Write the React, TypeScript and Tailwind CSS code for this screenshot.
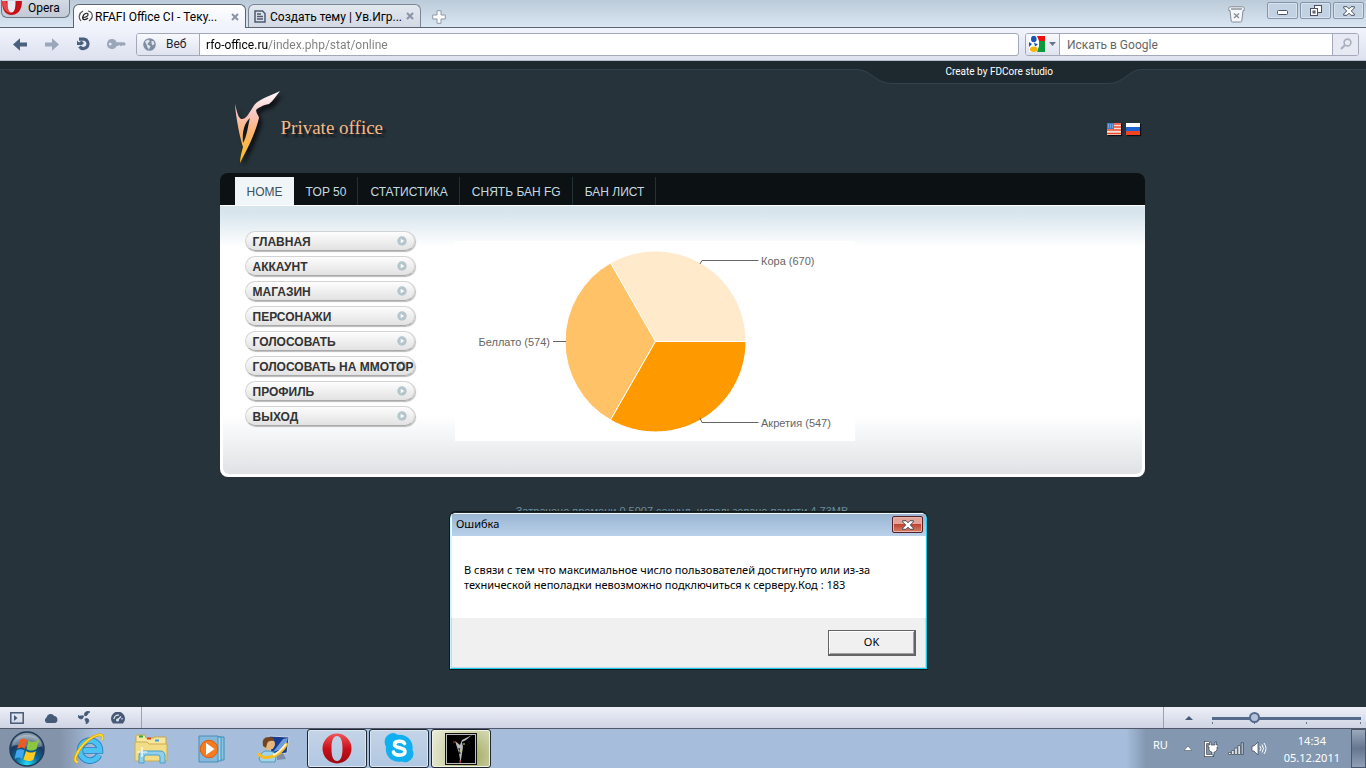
import React from "react";

const ui = "font-[Roboto,'Noto_Sans',sans-serif]";
const humanist = "font-['Noto_Sans','Open_Sans',sans-serif] text-[11px]";
const arial = "font-['Liberation_Sans',Arial,sans-serif]";

function CloseMark() {
  return (
    <svg className="size-2" viewBox="0 0 8 8" fill="none" stroke="#8a94a6" strokeWidth="2">
      <path d="M1 1 7 7M7 1 1 7" />
    </svg>
  );
}

function TabStrip() {
  return (
    <div className="relative flex h-7 items-start border-b border-[#5c6470] bg-linear-to-b from-[#bccbd9] to-[#d9e6f3] pl-px pr-0.5">
      <button className="flex h-[18px] w-[69px] shrink-0 items-center gap-1.5 rounded-b-md border border-t-0 border-[#6d7683] bg-linear-to-b from-[#d3dae3] to-[#c2cad6] pb-0.5 text-xs leading-[14px] text-black">
        <svg className="h-[14px] w-[20px] shrink-0" viewBox="0 0 20 14">
          <path d="M0 0H20C20 9 15.500 14 9.500 14C3.500 14 0 9 0 0Z" fill="#c80f17" />
          <path d="M0 0H4C5 4 6 7 9 12C4 12 1 8 0 0Z" fill="#e8454a" />
          <path d="M5.500 0H13.500C13.500 8 12.200 11.500 9.500 11.500C6.800 11.500 5.500 8 5.500 0Z" fill="#e8edf3" />
        </svg>
        <span>Opera</span>
      </button>
      <div className="relative z-10 ml-[3px] mt-1 flex h-6 w-[173px] shrink-0 items-center rounded-t-md border border-b-0 border-[#5c6470] bg-linear-to-b from-white to-[#eff2fb] pl-1 pr-1.5">
        <svg className="size-[15px] shrink-0" viewBox="0 0 15 15">
          <path d="M5 2C1 4 0 9 3 12M10 2C15 3 16 9 11 12" fill="none" stroke="#555" strokeWidth="1.200" />
          <path d="M4.500 8.500C8 8.500 10.500 7 10 5C9.500 3.300 5.500 4.500 4.700 8C4.200 11 7.500 11.500 10 9" fill="none" stroke="#222" strokeWidth="1.200" />
        </svg>
        <span className="ml-0.5 grow whitespace-nowrap pt-px text-xs text-black">RFAFI Office CI - Теку...</span>
        <button aria-label="Закрыть вкладку"><CloseMark /></button>
      </div>
      <div className="ml-0.5 mt-1 flex h-[23px] w-[173px] shrink-0 items-center rounded-t-md border border-b-0 border-[#7c8593] bg-linear-to-b from-[#e2e7ef] to-[#d4dae4] pl-[5px] pr-1.5">
        <svg className="h-[13px] w-[12px] shrink-0" viewBox="0 0 12 13" fill="none" stroke="#4d5b70" strokeWidth="1.500">
          <path d="M1 1H8.500L11 3.500V12H1ZM3 4H7M3 6.500H9M3 9H9" />
        </svg>
        <span className="ml-1 grow whitespace-nowrap pt-0.5 text-xs text-black">Создать тему | Ув.Игр...</span>
        <button aria-label="Закрыть вкладку"><CloseMark /></button>
      </div>
      <button className="ml-[11px] mt-2.5" aria-label="Новая вкладка">
        <svg className="size-[14px]" viewBox="0 0 14 14" fill="#fdfdfe" stroke="#8f99a8">
          <path d="M5 .7H9V5H13.300V9H9V13.300H5V9H.7V5H5Z" />
        </svg>
      </button>
      <div className="grow" />
      <button className="mr-[22px] mt-1.5" aria-label="Закрытые вкладки">
        <svg className="h-[17px] w-[17px]" viewBox="0 0 17 17" fill="#f5f7fa" stroke="#858c96">
          <path d="M.8 2.500Q.8.800 2.500.800H14.500Q16.200.800 16.200 2.500V4.500H15L13.800 15Q13.600 16 12.600 16H4.400Q3.400 16 3.200 15L2 4.500H.8Z" />
          <path d="M3 3H14" stroke="#5f6670" />
          <path d="M6 7.500 11 12M11 7.500 6 12" strokeWidth="1.300" />
        </svg>
      </button>
      <div className="mt-0.5 flex gap-0.5">
        <button aria-label="Свернуть" className="flex h-[17px] w-[31px] items-center justify-center rounded-[2px] border border-[#8494ad] bg-[#c3d2e2] pt-1 shadow-[inset_0_0_0_1px_#d8e3ee]">
          <svg className="h-[5px] w-[11px]" viewBox="0 0 11 5"><rect x=".5" y=".5" width="10" height="4" rx="1" fill="#fff" stroke="#4c5263" /></svg>
        </button>
        <button aria-label="Восстановить" className="flex h-[17px] w-[31px] items-center justify-center rounded-[2px] border border-[#8494ad] bg-[#c3d2e2] shadow-[inset_0_0_0_1px_#d8e3ee]">
          <svg className="h-[11px] w-[12px]" viewBox="0 0 12 11" fill="#fff" stroke="#4c5263">
            <rect x="4.500" y=".5" width="7" height="7" /><rect x=".5" y="3.500" width="7" height="7" /><rect x="3" y="6" width="2" height="2" fill="#9aa8bb" />
          </svg>
        </button>
        <button aria-label="Закрыть" className="flex h-[17px] w-[31px] items-center justify-center rounded-[2px] border border-[#8494ad] bg-[#c3d2e2] shadow-[inset_0_0_0_1px_#d8e3ee]">
          <svg className="h-[10px] w-[12px]" viewBox="0 0 12 10" fill="#fff" stroke="#4c5263">
            <path d="M.7.700H4L6 2.800 8 .700H11.300V2L8.300 5 11.300 8V9.300H8L6 7.200 4 9.300H.7V8L3.700 5 .7 2Z" />
          </svg>
        </button>
      </div>
    </div>
  );
}

function Toolbar() {
  return (
    <div className="flex h-[33px] items-center border-b border-[#b5bccb] bg-linear-to-b from-[#f1f4fc] to-[#dde1ee] pl-[13px] pr-[7px]">
      <div className="flex shrink-0 items-center gap-[18px]">
        <button aria-label="Назад">
          <svg className="h-[13px] w-[14px]" viewBox="0 0 14 13" fill="#4b607e"><path d="M0 6.500 7 .3V4.500H14V8.500H7V12.700Z" /></svg>
        </button>
        <button aria-label="Вперёд">
          <svg className="h-[13px] w-[14px]" viewBox="0 0 14 13" fill="#9aa6b9"><path d="M14 6.500 7 .3V4.500H0V8.500H7V12.700Z" /></svg>
        </button>
        <button aria-label="Обновить">
          <svg className="h-[14px] w-[14px]" viewBox="0 0 14 14">
            <path d="M2 2.200H7A4.700 4.700 0 1 1 2.500 9.500" fill="none" stroke="#4b607e" strokeWidth="3.200" />
            <path d="M0 8V3.500L2 5.500 4.500 3.500 7 6 5 8Z" fill="#4b607e" />
          </svg>
        </button>
        <button aria-label="Пароли" className="-ml-0.5">
          <svg className="h-[10px] w-[19px]" viewBox="0 0 19 10" fill="#9aa6b9" fillRule="evenodd">
            <path d="M5 0A5 5 0 0 1 9.600 3.200H17L19 5 17 7 15.500 6 14 7.500 12.500 6 11 7H9.600A5 5 0 1 1 5 0ZM3.200 3.700A1.400 1.400 0 1 0 3.200 6.500 1.400 1.400 0 0 0 3.200 3.700Z" />
          </svg>
        </button>
      </div>
      <div className="ml-2.5 flex h-[23px] grow items-stretch overflow-hidden rounded-[3px] border border-[#a3a9b8] bg-white">
        <button className="flex w-[63px] shrink-0 items-center gap-2.5 border-r border-[#a3a9b8] bg-linear-to-b from-[#f8f9fd] to-[#dfe3ef] pl-1.5 text-xs text-[#1d2633]">
          <svg className="size-[13px]" viewBox="0 0 13 13">
            <circle cx="6.500" cy="6.500" r="6.300" fill="#7f8da1" />
            <path d="M2 3.500 5 1.500 7 3 5.500 4.500 4.500 6.500 7.500 8 6 11.500 4.500 9.500 3.500 6.500ZM8.500 3 10.500 3 11.500 6 9.500 7.500 8.500 5.500Z" fill="#dfe4ec" />
          </svg>
          Веб
        </button>
        <input aria-label="Адрес" readOnly value="rfo-office.ru/index.php/stat/online"
          className="min-w-0 grow bg-[linear-gradient(90deg,#000_68px,#7d7d7d_68px)] bg-clip-text pl-1.5 pt-0.5 text-xs text-transparent outline-none" />
      </div>
      <div className="ml-1.5 flex h-[23px] w-[334px] shrink-0 items-stretch overflow-hidden rounded-[3px] border border-[#a3a9b8] bg-white">
        <button aria-label="Google" className="flex w-[34px] shrink-0 items-center gap-1 border-r border-[#a3a9b8] bg-linear-to-b from-[#f8f9fd] to-[#dfe3ef] pl-[3px]">
          <svg className="size-[16px]" viewBox="0 0 16 16">
            <rect width="16" height="16" fill="#fff" />
            <path d="M8 0H16V5H10Z" fill="#e11" /><path d="M10 5H16V16H8L10 10Z" fill="#0c9a3d" />
            <path d="M0 6 3 8 0 11Z" fill="#1a55b5" />
            <ellipse cx="4.800" cy="3" rx="2.800" ry="3.200" fill="#1558b8" />
            <path d="M5 6.500 9 8.500 6 10.500Z" fill="#1558b8" />
            <ellipse cx="4.800" cy="13.300" rx="3.800" ry="2.700" fill="#f5b30c" />
          </svg>
          <svg className="h-1 w-[7px]" viewBox="0 0 7 4" fill="#68758a"><path d="M0 0H7L3.500 4Z" /></svg>
        </button>
        <input aria-label="Поиск" placeholder="Искать в Google" className="min-w-0 grow pl-[7px] pt-0.5 text-xs outline-none placeholder:text-[#666]" />
        <button aria-label="Найти" className="flex w-[26px] shrink-0 items-center justify-center border-l border-[#a3a9b8] bg-[#e7eaf3]">
          <svg className="size-[12px]" viewBox="0 0 12 12" fill="none" stroke="#a9b0be"><circle cx="7.500" cy="4.500" r="3.400" strokeWidth="1.600" /><path d="M5 7 1 11" strokeWidth="2.200" /></svg>
        </button>
      </div>
    </div>
  );
}

function Logo() {
  return (
    <svg className="h-[76px] w-[52px] shrink-0 overflow-visible drop-shadow-[3px_4px_2px_rgba(0,0,0,0.7)]" viewBox="0 0 52 76">
      <defs>
        <linearGradient id="flame" x1="0" y1="0" x2="0" y2="1">
          <stop offset="0" stopColor="#fff" /><stop offset=".33" stopColor="#f9c3bd" /><stop offset=".6" stopColor="#fbb46c" /><stop offset="1" stopColor="#fdc010" />
        </linearGradient>
      </defs>
      <path fill="url(#flame)" d="M45 0C41 5 38 10 34 13C28 14 23 17 21 19C21 22 24 25 24 27C20 44 11 60 5 72C5 66 7 60 8 56C5 47 1 28 0 13C2 21 3 26 6 28C11 29 14 22 18 16C22 9 30 7 45 0ZM15 27C9 32 7 42 8 52C12 46 13 34 15 27Z" />
    </svg>
  );
}

const sections = ["TOP 50", "СТАТИСТИКА", "СНЯТЬ БАН FG", "БАН ЛИСТ"];
const menu = ["ГЛАВНАЯ", "АККАУНТ", "МАГАЗИН", "ПЕРСОНАЖИ", "ГОЛОСОВАТЬ", "ГОЛОСОВАТЬ НА ММОТОР", "ПРОФИЛЬ", "ВЫХОД"];

function Chart() {
  return (
    <svg className={`${arial} h-[200px] w-[400px] bg-white text-[11px]`} viewBox="0 1 400 200" role="img" aria-label="Онлайн по расам">
      <g stroke="#fff">
        <path d="M200.500 101.500V101.500H291A90.500 90.500 0 0 0 155.500 23Z" fill="#ffeacc" />
        <path d="M200.500 101.500 155.500 23A90.500 90.500 0 0 0 155.500 180Z" fill="#ffc266" />
        <path d="M200.500 101.500 155.500 180A90.500 90.500 0 0 0 291 101.500Z" fill="#ff9900" />
      </g>
      <g fill="none" stroke="#666">
        <path d="M245 24 247 20.500H303.500" /><path d="M245 178 247 182.500H303.500" /><path d="M98 101.500H111" />
      </g>
      <g fill="#666">
        <text x="306" y="25">Кора (670)</text>
        <text x="306" y="187">Акретия (547)</text>
        <text x="95" y="106" textAnchor="end">Беллато (574)</text>
      </g>
    </svg>
  );
}

function Dialog() {
  return (
    <div role="dialog" aria-labelledby="dlg-title" className={`${humanist} absolute left-[450px] top-[451px] w-[477px] overflow-hidden rounded-t-md border border-[#16cdea] border-l-[#c9f3fa] border-t-[#1a242b] bg-[#f0f0f0] text-black outline outline-[#10181c]`}>
      <div className="flex h-[23px] items-center justify-between bg-linear-to-b from-[#99b4d1] to-[#b9d1ea] pl-[5px] pr-[3px] shadow-[inset_1px_1px_0_#f4f8fc]">
        <h2 id="dlg-title">Ошибка</h2>
        <button aria-label="Закрыть окно" className="flex h-[17px] w-[31px] items-center justify-center rounded-[2px] border border-[#53212c] bg-linear-to-b from-[#e3a297] from-45% via-[#be4431] via-50% to-[#d47f66] shadow-[inset_0_0_0_1px_#e9b5ab]">
          <svg className="h-[10px] w-[12px]" viewBox="0 0 12 10" fill="#fff" stroke="#4c4a57">
            <path d="M.7.700H4L6 2.800 8 .700H11.300V2L8.300 5 11.300 8V9.300H8L6 7.200 4 9.300H.7V8L3.700 5 .7 2Z" />
          </svg>
        </button>
      </div>
      <div className="mx-px bg-white px-3 py-[26px] leading-[15px]">
        <p>В связи с тем что максимальное число пользователей достигнуто или из-за<br />технической неполадки невозможно подключиться к серверу.Код : 183</p>
      </div>
      <div className="flex justify-end border border-t-0 border-[#c8d8e8] pb-[11px] pr-[9px] pt-3">
        <button className="h-[26px] w-[88px] border border-r-2 border-b-2 border-[#646464] bg-[#f0f0f0] shadow-[inset_1px_1px_0_#fff,inset_-1px_-1px_0_#a0a0a0]">OK</button>
      </div>
    </div>
  );
}

function Page() {
  return (
    <main className={`${arial} relative bg-[#27333b] pb-[189px]`}>
      <svg className="absolute inset-x-0 top-0 h-6 w-full" viewBox="0 0 1366 24" preserveAspectRatio="none">
        <path d="M-2-1H1368V8.500H1142C1128 8.500 1125 22.500 1108 22.500H892C875 22.500 871 8.500 857 8.500H-2Z" fill="#1e292f" stroke="#33434e" />
      </svg>
      <div className="relative mx-auto w-[925px] -left-px">
        <div className={`${ui} pl-[726px] pt-[3px] text-[10px] leading-[15px] text-white`}>Create by FDCore studio</div>
        <header className="flex h-[94px] items-start justify-between pl-[15px] pr-[5px] pt-3">
          <div className="flex">
            <Logo />
            <h1 className="-ml-1.5 mt-6 font-['Liberation_Serif',serif] text-[19px] leading-[26px] text-[#f6b987] [text-shadow:3px_3px_2px_#11181c]">Private office</h1>
          </div>
          <div className="mt-8 flex gap-[5px]">
            <a href="#en" aria-label="English">
              <svg className="h-[12px] w-[14px] shadow-[1px_1px_1px_#0a0f12]" viewBox="0 0 14 12">
                <rect width="14" height="12" fill="#f8ded6" /><path d="M0 1H14M0 4H14M0 7H14M0 10.500H14" stroke="#e8492a" strokeWidth="1.500" /><rect width="7" height="6" fill="#3b7fd0" /><path d="M1 2H6M1 4H6" stroke="#a8c8ec" strokeDasharray="1 1" />
              </svg>
            </a>
            <a href="#ru" aria-label="Русский">
              <svg className="h-[12px] w-[14px] shadow-[1px_1px_1px_#0a0f12]" viewBox="0 0 14 12"><rect width="14" height="4" fill="#fff" /><rect y="4" width="14" height="4" fill="#1d62cf" /><rect y="8" width="14" height="4" fill="#f04524" /></svg>
            </a>
          </div>
        </header>
        <nav className="flex h-8 items-end rounded-t-lg bg-[#0c1114] pl-[15px] text-xs leading-[26px]">
          <a href="#home" className="bg-[#f0f5f8] pl-3 pr-[11px] pt-0.5 text-[#3c4f5e]">HOME</a>
          {sections.map((s) => (
            <a key={s} href="#section" className="border-r border-[#253138] pl-3 pr-[11px] pt-0.5 text-[#c3dbe0]">{s}</a>
          ))}
        </nav>
        <div className="rounded-b-lg bg-[linear-gradient(#fff_1px,#d7e5ed_1px,#d7e5ed_8px,#fff_42px)] px-[3px] pb-[3px]">
          <div className="flex h-[269px] rounded-b-md bg-[linear-gradient(transparent_210px,#dfe2e5_100%)] pl-[22px] pt-[26px]">
            <ul className="w-[170px] space-y-[5px]">
              {menu.map((m) => (
                <li key={m}>
                  <a href="#menu" className="relative flex h-5 items-center whitespace-nowrap rounded-full border border-[#d3d3d3] border-b-[#aaa] bg-linear-to-b from-[#fdfdfd] to-[#e2e2e2] pl-[7px] text-xs font-bold text-[#333] shadow-[1px_1px_1px_#bbb]">
                    <svg className="absolute right-[7px] top-1 size-[10px]" viewBox="0 0 10 10"><circle cx="5" cy="5" r="4.700" fill="#b4c5cc" /><path d="M3.700 2.700 7.300 5 3.700 7.300Z" fill="#fff" /></svg>
                    <span className="relative pt-px">{m}</span>
                  </a>
                </li>
              ))}
            </ul>
            <div className="ml-10 mt-[10px]"><Chart /></div>
          </div>
        </div>
        <p className="mt-[27px] text-center text-[11px] leading-[14px] text-[#6a8c9a]">Затрачено времени 0.5007 секунд, использовано памяти 4.73MB</p>
      </div>
      <Dialog />
    </main>
  );
}

function StatusBar() {
  return (
    <div className="flex h-[22px] items-stretch border-b border-[#50586a] bg-linear-to-b from-[#eef0f8] to-[#cfd4e4]">
      <div className="flex w-[142px] items-center gap-5 border-r border-[#9aa1b0] pl-2.5">
        <button aria-label="Панели">
          <svg className="h-[12px] w-[14px]" viewBox="0 0 14 12"><rect x=".8" y=".8" width="12.400" height="10.400" fill="none" stroke="#465976" strokeWidth="1.500" /><path d="M4 3V9L7.500 6Z" fill="#465976" /></svg>
        </button>
        <button aria-label="Link">
          <svg className="h-[10px] w-[14px]" viewBox="0 0 14 10" fill="#465976"><path d="M3 10A3 3 0 0 1 2.500 4.500 4.200 4.200 0 0 1 10.200 3 3.600 3.600 0 0 1 11 10Z" /></svg>
        </button>
        <button aria-label="Unite">
          <svg className="size-[13px]" viewBox="0 0 13 13" fill="#465976"><path d="M7 5C5 2 9-1 12 1 9.500 1.500 10 4 8 5ZM5.500 6.500C4 9 0 8 0 4.500 2 6 4 4 6 5.200ZM8 7.500C12 7 11.500 12 8 13 9 10.500 6.500 9.500 7 7.500Z" stroke="#465976" strokeWidth=".8" /><circle cx="6.900" cy="6.200" r="1.300" fill="#e0e4ee" /></svg>
        </button>
        <button aria-label="Turbo">
          <svg className="h-[12px] w-[14px]" viewBox="0 0 14 12"><path d="M2 11.500A7 7 0 1 1 12 11.500Z" fill="#465976" /><path d="M3 7A4 4 0 0 1 8 3.200M6.500 8 10 4.500M11 6V7.500" stroke="#e0e4ee" strokeWidth="1.200" fill="none" /><circle cx="6.500" cy="8" r="1.500" fill="#e0e4ee" /></svg>
        </button>
      </div>
      <div className="grow" />
      <div className="flex w-[203px] items-center border-l border-[#9aa1b0] pl-[21px]">
        <button aria-label="Масштаб" className="mr-[19px]"><svg className="h-1 w-2" viewBox="0 0 8 4" fill="#465976"><path d="M4 0 8 4H0Z" /></svg></button>
        <input type="range" aria-label="Масштаб страницы" defaultValue={27}
          className="h-4 w-[149px] appearance-none bg-[linear-gradient(#566b8c,#566b8c),linear-gradient(90deg,#68758a_1px,transparent_1px_42px,#68758a_42px_43px,transparent_43px_94px,#68758a_94px_95px,transparent_95px_148px,#68758a_148px)] bg-[length:100%_3px,100%_2px] bg-[position:0_7px,0_12px] bg-no-repeat [&::-webkit-slider-thumb]:size-[11px] [&::-webkit-slider-thumb]:appearance-none [&::-webkit-slider-thumb]:rounded-full [&::-webkit-slider-thumb]:border-2 [&::-webkit-slider-thumb]:border-[#566b8c] [&::-webkit-slider-thumb]:bg-[#b3c1d9]" />
      </div>
    </div>
  );
}

function Taskbar() {
  const running = "flex h-[39px] w-[60px] items-center justify-center rounded-[3px] border border-[#1e2733]";
  return (
    <div className={`${humanist} flex h-[39px] items-center bg-[linear-gradient(90deg,#8393aa_60px,#a6bedc_95px,#a6bedc_calc(100%-240px),#8397b0_calc(100%-220px))] text-white`}>
      <button aria-label="Пуск" className="ml-[9px]">
        <svg className="size-9" viewBox="0 0 36 36">
          <defs>
            <radialGradient id="orb" cx=".5" cy=".95" r=".85"><stop offset="0" stopColor="#25e0fb" /><stop offset=".4" stopColor="#0d6a9e" /><stop offset=".75" stopColor="#173a5e" /><stop offset="1" stopColor="#8598aa" /></radialGradient>
          </defs>
          <circle cx="18" cy="18" r="17" fill="url(#orb)" stroke="#203b58" strokeWidth="1.500" />
          <path d="M3 15C5 0 31 0 33 15C24 20 12 12 3 15Z" fill="#fff" opacity=".3" />
          <path d="M11 9C14 7 16 8 18 9L16 18C14 16 11 16 8 18Z" fill="#ee5a24" />
          <path d="M19.500 9.500C23 12 26 11 30 9L27.500 18C24 20 21 20 17.500 18Z" fill="#8cc63f" />
          <path d="M7.500 19.500C11 17.500 13 18 15.500 19.500L13 28C11 26 8 26 5.500 28Z" fill="#3fa7f0" />
          <path d="M17 20C20 22 24 22 27 20L24.500 28.500C21 31 18 30 14.500 28.500Z" fill="#ffcb1f" />
        </svg>
      </button>
      <button aria-label="Internet Explorer" className="ml-[29px]">
        <svg className="h-[32px] w-[30px]" viewBox="0 0 30 32" fill="none">
          <path d="M25 22A10 10 0 1 1 26 17.500H10" stroke="#2a7fc0" strokeWidth="6.500" />
          <path d="M25 22A10 10 0 1 1 26 17.500H10" stroke="#4cc2f2" strokeWidth="4.800" />
          <path d="M4 29C-3 29 4 16 13 8C22 1 31-1 28 7" stroke="#e3a600" strokeWidth="3" /><path d="M4 29C-3 29 4 16 13 8C22 1 31-1 28 7" stroke="#ffe03a" strokeWidth="1.500" />
        </svg>
      </button>
      <button aria-label="Проводник" className="ml-[30px]">
        <svg className="h-[30px] w-[34px]" viewBox="0 0 34 30">
          <path d="M2 4V2Q2 1 3 1H11L12 4H20V3H31Q32 3 32 4V26H2Z" fill="#f7e69c" stroke="#c5a84a" />
          <rect x="5" y="1.500" width="4" height="2" fill="#2ca54a" /><rect x="13" y="3.500" width="4" height="2" fill="#d9432f" /><rect x="21" y="5.500" width="4" height="2" fill="#38a4dd" />
          <path d="M1 8H13L15 10H33V26Q33 27 32 27H2Q1 27 1 26Z" fill="#f3dc86" stroke="#c9ae55" />
          <path d="M5 29V22Q5 17 10 17H26Q31 17 31 22V29H26V23Q26 21 24 21H12Q10 21 10 23V29Z" fill="#8ed0ee" stroke="#4b9fcb" />
          <path d="M8 13V23M3 18H13" stroke="#fff" strokeWidth="1.200" />
        </svg>
      </button>
      <button aria-label="Проигрыватель" className="ml-[30px]">
        <svg className="h-[28px] w-[30px]" viewBox="0 0 30 28">
          <path d="M7 2H26V25H7Z" fill="#89c5e3" stroke="#3990bb" /><path d="M4 2H23V26H4Z" fill="#a4d5ed" stroke="#3990bb" /><path d="M1 1H20V27H1Z" fill="#84b9dc" stroke="#4d8db9" />
          <circle cx="11" cy="14" r="8.800" fill="#f47b20" stroke="#dc5d12" /><path d="M8 8V20L16.500 14Z" fill="#fff" />
        </svg>
      </button>
      <button aria-label="Удалённая помощь" className="ml-[29px]">
        <svg className="h-[28px] w-[34px]" viewBox="0 0 34 28">
          <path d="M12 1 32 2 30 18 14 20Z" fill="#183d8f" stroke="#cad6e6" /><path d="M20 19 26 18 29 24 20 25Z" fill="#7f8ea5" />
          <path d="M16 17 26 4 31 3 28 13Z" fill="#6c9ddf" />
          <path d="M2 24Q4 15 11 16Q19 16 19 22L18 27H4Z" fill="#9ed5ea" stroke="#5799b9" />
          <circle cx="12" cy="9" r="6" fill="#e6b77c" /><path d="M6 11Q4 2 12 2Q18 2 17 6Q11 5 10 9L9 13Z" fill="#72451f" />
          <path d="M2 18C2 25 22 25 30 8" fill="none" stroke="#f8bd23" strokeWidth="3" /><path d="M16 20C22 18 25 14 29 9" fill="none" stroke="#fff2bf" strokeWidth="2" />
        </svg>
      </button>
      <div className="ml-4 flex gap-0.5">
        <button aria-label="Opera" className={`${running} bg-linear-to-b from-[#c5d4e7] to-[#b0c7e2] shadow-[inset_0_0_0_1px_#dbe6f2]`}>
          <svg className="h-[32px] w-[30px]" viewBox="0 0 30 32">
            <defs><linearGradient id="opera" x1="0" y1="0" x2="0" y2="1"><stop stopColor="#f0565a" /><stop offset=".5" stopColor="#cc1019" /><stop offset="1" stopColor="#9c0910" /></linearGradient></defs>
            <path fillRule="evenodd" fill="url(#opera)" d="M15 .5A14.500 15 0 1 1 15 30.500A14.500 15 0 1 1 15 .5ZM15 3C11 3 9.500 8 9.500 15.500S11 28 15 28 20.500 23 20.500 15.500 19 3 15 3Z" />
          </svg>
        </button>
        <button aria-label="Skype" className={`${running} bg-linear-to-b from-[#c5d4e7] to-[#b0c7e2] shadow-[inset_0_0_0_1px_#dbe6f2]`}>
          <svg className="size-[31px]" viewBox="0 0 31 31">
            <path d="M9 0A8.500 8.500 0 0 1 13.500 1.800C23 .5 30 8 28.500 17A8.500 8.500 0 0 1 17.500 28.500C8 30 .5 23 2 13.500A8.800 8.800 0 0 1 9 0Z" fill="#10b0f0" />
            <path d="M20.500 10.500C19 7.500 10.500 7 10.500 11.500C10.500 16 21 13.500 21 18.500C21 23.500 10.500 23 9.500 19" fill="none" stroke="#fff" strokeWidth="3.600" strokeLinecap="round" />
          </svg>
        </button>
        <button aria-label="Private office" className={`${running} bg-[radial-gradient(circle_at_70%_70%,#a4ab62,#d3d8b2_60%,#eceedd)] shadow-[inset_0_0_0_1px_#f0f2df]`}>
          <svg className="size-8" viewBox="0 0 32 32">
            <rect x=".5" y=".5" width="31" height="31" stroke="#111" /><rect x="1.500" y="1.500" width="29" height="29" fill="none" stroke="#bbb" />
            <path d="M27 2 21 7 17 9 18 14 15.500 30 14 20 10 8 15 12 17 7Z" fill="#b9b9b9" /><path d="M14 15 15 21" stroke="#000" />
            <path d="M15 27V30M9 8V10" stroke="#d33" /><path d="M19 10V12M15 17V19" stroke="#dd3" />
          </svg>
        </button>
      </div>
      <div className="grow" />
      <span className="pb-1.5">RU</span>
      <button aria-label="Скрытые значки" className="ml-4"><svg className="h-[5px] w-2" viewBox="0 0 8 5" fill="#fff" stroke="#3c4654" strokeWidth=".5"><path d="M4 0 8 4.500H0Z" /></svg></button>
      <svg className="ml-3 h-4 w-[14px]" viewBox="0 0 14 16" stroke="#3b4450">
        <path d="M5 1.500H1.500V14.500H8.500V12" fill="none" stroke="#3b4450" strokeWidth="3" /><path d="M6 1.500H1.500V14.500H8.500V12" fill="none" stroke="#fff" strokeWidth="1.500" />
        <path d="M5.500 1V4H4V6H5V9L7 11H8V14H10V11H11L13 9V6H14V4H12.500V1H11V4H7V1Z" fill="#fff" strokeWidth=".7" />
      </svg>
      <svg className="ml-2.5 h-[13px] w-4" viewBox="0 0 16 13" fill="#fff" stroke="#4a5564" strokeWidth=".8"><path d="M.5 10.500H3V12.500H.5ZM3.700 8.500H6V12.500H3.700ZM6.800 6H9.200V12.500H6.800ZM10 3.500H12.300V12.500H10Z" /><path d="M13.100.700H15.500V12.500H13.100Z" fill="#a9b4c4" /></svg>
      <svg className="ml-[7px] h-[15px] w-4" viewBox="0 0 16 15" fill="none"><path d="M1 5H3L7 1V14L3 10H1Z" fill="#fff" stroke="#4a5564" strokeWidth=".8" /><path d="M9 5Q11 7.500 9 10M11 3.500Q14 7.500 11 11.500M13 2Q17 7.500 13 13" stroke="#fff" /></svg>
      <div className="ml-[17px] mr-[11px] text-center leading-[17px]">14:34<br />05.12.2011</div>
      <button aria-label="Свернуть все окна" className="h-[39px] w-[15px] border border-[#4b5769] bg-linear-to-b from-[#9aa9bd] via-[#66768e] to-[#8fa0b8]" />
    </div>
  );
}

export default function App() {
  return (
    <div className={`${ui} w-full overflow-hidden`}>
      <TabStrip />
      <Toolbar />
      <Page />
      <StatusBar />
      <Taskbar />
    </div>
  );
}
